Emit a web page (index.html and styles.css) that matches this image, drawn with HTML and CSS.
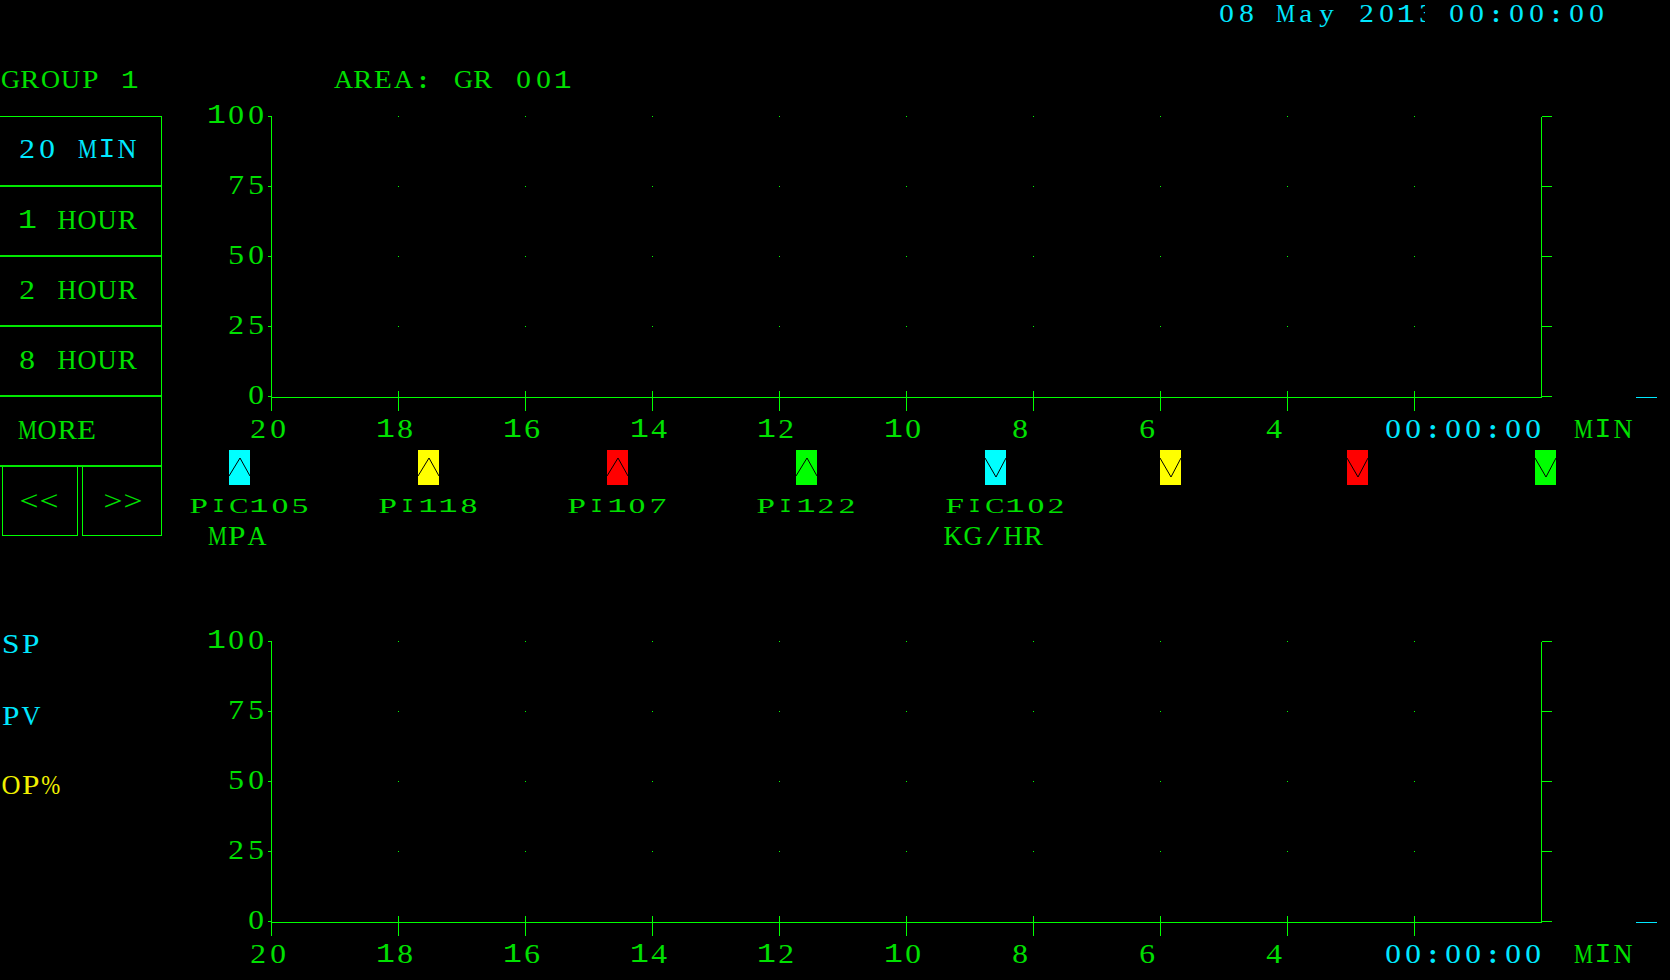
FILE: index.html
```html
<!DOCTYPE html>
<html>
	<head>
		<meta charset="utf-8">
		<title>GROUP 1</title>
		<link rel="stylesheet" href="styles.css">
		<script type="text/javascript" src="chart.js"></script>
	</head>
	<body>
		<div class="clock">
			<span class="crt date">08 May 2013</span>
			<span class="crt time">00:00:00</span>
		</div>
		<div class="title">
			<span class="crt group">GROUP 1</span>
			<span class="crt area">AREA: GR 001</span>
		</div>
		<div class="main">
			<!--left menu-->
			<div class="side">
				<div class="menu">
					<div class="btn on"><span class="crt">20 MIN</span></div>
					<div class="btn"><span class="crt">1 HOUR</span></div>
					<div class="btn"><span class="crt">2 HOUR</span></div>
					<div class="btn"><span class="crt">8 HOUR</span></div>
					<div class="btn"><span class="crt">MORE</span></div>
				</div>
				<div class="arrows">
					<div class="arrow prev"><span class="crt">&lt;&lt;</span></div>
					<div class="arrow next"><span class="crt">&gt;&gt;</span></div>
				</div>
				<div class="readout">
					<div class="crt sp">SP</div>
					<div class="crt pv">PV</div>
					<div class="crt op">OP%</div>
				</div>
			</div>
			<div class="plots">
				<div class="chart"></div>
				<!--pen markers-->
				<div class="legend">
					<div class="pen">
						<svg class="mark cyan" viewBox="0 0 21 35"><polyline points="0,26 11,8 21,26"/></svg>
						<div class="crt tag">PIC105</div>
						<div class="crt unit">MPA</div>
					</div>
					<div class="pen">
						<svg class="mark yellow" viewBox="0 0 21 35"><polyline points="0,26 11,8 21,26"/></svg>
						<div class="crt tag">PI118</div>
					</div>
					<div class="pen">
						<svg class="mark red" viewBox="0 0 21 35"><polyline points="0,26 11,8 21,26"/></svg>
						<div class="crt tag">PI107</div>
					</div>
					<div class="pen">
						<svg class="mark green" viewBox="0 0 21 35"><polyline points="0,26 11,8 21,26"/></svg>
						<div class="crt tag">PI122</div>
					</div>
					<div class="pen">
						<svg class="mark cyan" viewBox="0 0 21 35"><polyline points="0,8 11,27 21,8"/></svg>
						<div class="crt tag">FIC102</div>
						<div class="crt unit kg">KG/HR</div>
					</div>
					<div class="pen">
						<svg class="mark yellow" viewBox="0 0 21 35"><polyline points="0,8 11,27 21,8"/></svg>
					</div>
					<div class="pen">
						<svg class="mark red" viewBox="0 0 21 35"><polyline points="0,8 11,27 21,8"/></svg>
					</div>
					<div class="pen">
						<svg class="mark green" viewBox="0 0 21 35"><polyline points="0,8 11,27 21,8"/></svg>
					</div>
				</div>
				<div class="chart"></div>
			</div>
		</div>
	</body>
</html>
```

FILE: styles.css
```css
*{
	margin: 0px;
	padding: 0px;
	box-sizing: border-box;
}
html,body{
	height: 100%;
	overflow: hidden;
	background-color: #000;
}
body{
	font-family: "Liberation Serif", serif;
	font-size: 28px;
	color: #00e000;
}
/* text on a fixed 20px character grid, chart.js splits it into cells */
.crt{
	display: block;
	height: 28px;
	line-height: 28px;
	white-space: pre;
	--stretch: 1.12;
}
span.crt{
	display: inline-block;
}
.cell{
	display: inline-flex;
	justify-content: center;
	width: 20px;
	height: 28px;
	vertical-align: top;
}
.glyph{
	flex: none;
	display: block;
}
.colon{
	font-weight: bold;
}
/* I and 1 need the wide slab feet of the mono face */
.slab{
	font-family: "Liberation Mono", monospace;
	position: relative;
	top: 0.04em;
}

.clock{
	display: flex;
	height: 28px;
	padding: 0 0 0 1216px;
	color: #00e8ff;
	font-size: 26px;
}
.date{
	width: 209px;
	overflow: hidden;
}
.time{
	margin-left: 21px;
}
.title{
	display: flex;
	height: 88px;
	padding-top: 38px;
	font-size: 26px;
}
.group{
	width: 333px;
}

.main{
	display: flex;
}
.side{
	width: 162px;
	flex: none;
}
.menu{
	border-top: 1px solid #00ff00;
	border-right: 1px solid #00ff00;
}
.btn{
	height: 70px;
	padding: 17px 0 0 17px;
	border-bottom: 2px solid #00e800;
}
.btn:first-child{
	padding-top: 16px;
}
.on{
	color: #00e8ff;
}
.arrows{
	display: flex;
	justify-content: space-between;
	height: 69px;
	padding-left: 2px;
	border-right: 1px solid #00ff00;
}
.arrow{
	border: 1px solid #00ff00;
	border-top: none;
	padding-top: 18px;
}
.prev{
	width: 76px;
	padding-left: 16px;
}
.next{
	width: 80px;
	margin-right: -1px;
	padding-left: 20px;
}
.arrow .crt{
	--stretch: 1.2;
}
.readout{
	padding: 94px 0 0 1px;
	color: #00e8ff;
}
.pv{
	margin-top: 44px;
}
.op{
	margin-top: 41px;
	color: #f0f000;
}

.plots{
	flex: 1;
}
.chart{
	position: relative;
	height: 334px;
}
.chart svg{
	position: absolute;
	left: 0;
	top: 0;
	width: 1508px;
	height: 334px;
}
.chart line{
	shape-rendering: crispEdges;
}
.label{
	position: absolute;
}
.legend{
	display: grid;
	grid-template-columns: 189px 189px 189px 189px 175px 187px 188px 21px;
	height: 191px;
	padding-left: 67px;
}
.mark{
	display: block;
	width: 21px;
	height: 35px;
}
.mark polyline{
	fill: none;
	stroke: #000;
	stroke-width: 1;
}
.cyan{
	background-color: #00ffff;
}
.yellow{
	background-color: #ffff00;
}
.red{
	background-color: #ff0000;
}
.green{
	background-color: #00ff00;
}
.tag{
	margin: 11px 0 0 -41px;
	height: 20px;
	line-height: 20px;
	font-size: 20px;
	--stretch: 1.65;
}
.tag .cell{
	height: 20px;
	width: 20.4px;
}
.unit{
	margin: 6px 0 0 -22px;
}
.kg{
	margin-left: -42px;
}
```

FILE: chart.js
```js
window.onload = function(){
	var ticksX = [];
	for(var i=0; i<=10; i++){
		ticksX.push(109 + 127*i);
	}
	var ticksY = [0, 70, 140, 210, 280];
	var valY = ["100", "75", "50", "25", "0"];
	var valX = ["20", "18", "16", "14", "12", "10", "8", "6", "4"];
	var GREEN = "#00ff00";
	var NS = "http://www.w3.org/2000/svg";

	function drawLine(svg, x1, y1, x2, y2, color){
		var l = document.createElementNS(NS, "line");
		l.setAttribute("x1", x1 + 0.5);
		l.setAttribute("y1", y1 + 0.5);
		l.setAttribute("x2", x2 + 0.5);
		l.setAttribute("y2", y2 + 0.5);
		l.setAttribute("stroke", color);
		svg.appendChild(l);
	}

	function addLabel(box, text, left, top, color){
		var d = document.createElement("div");
		d.className = "crt label";
		d.textContent = text;
		d.style.left = left + "px";
		d.style.top = top + "px";
		if(color){
			d.style.color = color;
		}
		box.appendChild(d);
	}

	var charts = document.querySelectorAll(".chart");
	for(var c=0; c<charts.length; c++){
		var box = charts[c];
		var svg = document.createElementNS(NS, "svg");
		var x0 = ticksX[0], x1 = ticksX[10];
		var bottom = ticksY[4] + 1;

		//axes
		drawLine(svg, x0, 0, x0, bottom + 13, GREEN);
		drawLine(svg, x1, 0, x1, bottom, GREEN);
		drawLine(svg, x0, bottom, x1, bottom, GREEN);
		drawLine(svg, 1473, bottom, 1494, bottom, "#00e8ff");

		for(var i=0; i<ticksY.length; i++){
			drawLine(svg, x0 - 4, ticksY[i], x0, ticksY[i], GREEN);
			drawLine(svg, x1, ticksY[i], x1 + 10, ticksY[i], GREEN);
			addLabel(box, valY[i], 104 - valY[i].length*20, ticksY[i] - 15);
		}
		//bottom ticks and the dots of the grid
		for(var j=1; j<10; j++){
			drawLine(svg, ticksX[j], bottom - 7, ticksX[j], bottom + 13, GREEN);
			for(var k=0; k<4; k++){
				drawLine(svg, ticksX[j] - 0.5, ticksY[k], ticksX[j] + 0.5, ticksY[k], GREEN);
			}
		}
		for(var m=0; m<valX.length; m++){
			addLabel(box, valX[m], ticksX[m] - 23, 299);
		}
		addLabel(box, "00:00:00", 1221, 299, "#00e8ff");
		addLabel(box, "MIN", 1411, 299);
		box.appendChild(svg);
	}

	//split text into cells of the character grid
	var list = document.querySelectorAll(".crt");
	for(var n=0; n<list.length; n++){
		var el = list[n];
		var text = el.textContent;
		var stretch = parseFloat(getComputedStyle(el).getPropertyValue("--stretch"));
		el.textContent = "";
		for(var p=0; p<text.length; p++){
			var cell = document.createElement("span");
			var glyph = document.createElement("span");
			var ch = text[p];
			cell.className = "cell";
			glyph.className = "glyph";
			if(ch == ":"){
				glyph.className += " colon";
			}
			if(ch == "I" || ch == "1"){
				glyph.className += " slab";
			}
			glyph.textContent = ch;
			cell.appendChild(glyph);
			el.appendChild(cell);
			//stretch like the wide screen font, at most 19px
			var w = glyph.getBoundingClientRect().width;
			if(w > 0 && ch != ":" && ch != " " && ch != "I"){
				var s = Math.min(ch == "/" ? 1.6 : stretch, 19/w);
				glyph.style.transform = "scaleX(" + s + ")";
			}
		}
	}
};
```
